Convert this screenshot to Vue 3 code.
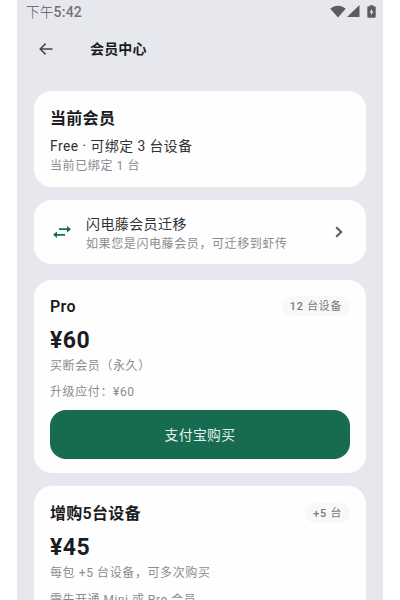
<script setup>
const plans = [
  { name: 'Pro', quota: ['12', '台设备'], price: '¥60', desc: '买断会员（永久）', note: '升级应付：¥60', action: '支付宝购买' },
  { name: '增购5台设备', quota: ['+5', '台'], price: '¥45', desc: '每包 +5 台设备，可多次购买', note: '需先开通 Mini 或 Pro 会员', action: '支付宝购买' },
]
</script>

<template>
  <div class="screen">
    <div class="phone">
      <header class="status">
        <span class="time">下午<span class="clock">5:42</span></span>
        <div class="signals">
          <svg class="wifi" viewBox="0 0 16 13"><path d="M0.3 3.8C4.7-.2 11.3-.2 15.700 3.800L8 12.500Z" /></svg>
          <svg class="cell" viewBox="0 0 13 12"><path d="M12.500 0V12H0Z" /></svg>
          <svg class="battery" viewBox="0 0 9 13">
            <path d="M2.700 1.200V.3H6.300V1.200H7.500Q8.700 1.200 8.700 2.400V11.500Q8.700 12.700 7.500 12.700H1.500Q.3 12.700 .3 11.500V2.400Q.3 1.200 1.500 1.200Z" />
            <path class="bolt" d="M4.900 3.800L2.500 7.500H4.100V10.300L6.500 6.600H4.900Z" />
          </svg>
        </div>
      </header>
      <nav class="bar">
        <svg class="back" viewBox="0 0 14 12"><path d="M13.500 6H1.300M6.600 .6L1.200 6L6.600 11.400" /></svg>
        <h1>会员中心</h1>
      </nav>
      <main>
        <section class="card current">
          <h2>当前会员</h2>
          <p class="level">Free · 可绑定 3 台设备</p>
          <p class="muted">当前已绑定 1 台</p>
        </section>
        <section class="card migrate">
          <svg class="swap" viewBox="0 0 18 12">
            <path class="line" d="M6 3.200H14.500M12 8.800H3.500" />
            <path class="head" d="M14 0L18 3.200L14 6.400ZM4 5.600L0 8.800L4 12Z" />
          </svg>
          <div class="info">
            <p class="name">闪电藤会员迁移</p>
            <p class="muted">如果您是闪电藤会员，可迁移到虾传</p>
          </div>
          <svg class="chevron" viewBox="0 0 8 12"><path d="M1.200 1.200L6.200 6L1.200 10.800" /></svg>
        </section>
        <section v-for="plan in plans" :key="plan.name" class="card plan">
          <div class="top">
            <h2>{{ plan.name }}</h2>
            <span class="quota"><b>{{ plan.quota[0] }}</b> {{ plan.quota[1] }}</span>
          </div>
          <div class="price">{{ plan.price }}</div>
          <p class="muted">{{ plan.desc }}</p>
          <p class="muted note">{{ plan.note }}</p>
          <button>{{ plan.action }}</button>
        </section>
      </main>
    </div>
  </div>
</template>

<style>
body { margin: 0; background: #fff; }
</style>

<style scoped>
* { box-sizing: border-box; }
.screen {
  height: 600px;
  overflow: hidden;
  display: flex;
  justify-content: center;
  font-family: Roboto, "Noto Sans CJK SC", sans-serif;
  color: #1b1c1f;
}
.phone { width: 366px; height: 600px; background: #e7e8ee; overflow: hidden; }
h1, h2, p { margin: 0; white-space: nowrap; }
.status {
  height: 24px;
  padding: 0 7px 0 9px;
  display: flex;
  justify-content: space-between;
  align-items: center;
}
.time { font-size: 13.6px; line-height: 24px; font-weight: 300; color: #55565a; letter-spacing: 0.2px; }
.clock { font-size: 14px; font-weight: 500; color: #737478; }
.signals { display: flex; align-items: center; margin-top: -2px; fill: #5b5c60; }
.wifi { width: 16px; height: 13px; }
.cell { width: 13px; height: 12px; margin-left: 1px; }
.battery { width: 9px; height: 13px; margin-left: 7px; }
.bolt { fill: #e7e8ee; }
.bar { height: 50px; padding-left: 22px; display: flex; align-items: center; }
.back { width: 14px; height: 12px; fill: none; stroke: #45464a; stroke-width: 1.5; }
h1 { margin-left: 37px; font-size: 14px; line-height: 20px; font-weight: 600; letter-spacing: 0.15px; }
main { padding: 17px 17px 0; }
.card { background: #fefefe; border-radius: 18px; }
.muted { padding-top: 1px; font-size: 12px; line-height: 18px; letter-spacing: 0.6px; color: #8b8c8f; }
h2 { font-size: 16px; line-height: 24px; font-weight: 600; letter-spacing: 0.3px; }
.current { height: 96px; padding: 16px 16px 0; }
.level { margin-top: 5px; font-size: 13.8px; line-height: 20px; letter-spacing: 0.5px; color: #303134; }
.migrate { height: 64px; margin-top: 13px; padding: 0 23px 0 19px; display: flex; align-items: center; }
.swap { width: 18px; height: 12px; }
.line { fill: none; stroke: #176b50; stroke-width: 1.700; }
.head { fill: #176b50; }
.info { flex: 1; margin-left: 15px; padding-top: 3px; }
.name { font-size: 14px; line-height: 20px; letter-spacing: 0.4px; color: #303134; }
.chevron { width: 8px; height: 12px; fill: none; stroke: #5c5d60; stroke-width: 2.1; }
.plan { height: 193px; margin-top: 16px; padding: 14px 16px 0; }
.plan + .plan { margin-top: 13px; padding-top: 15px; }
.top { height: 24px; display: flex; justify-content: space-between; align-items: center; }
.top h2 { padding-top: 1px; }
.quota {
  height: 20px;
  padding: 0 8px;
  border-radius: 10px;
  background: #f8f8f9;
  font-size: 10.8px;
  line-height: 21px;
  letter-spacing: 0.8px;
  color: #77787b;
}
.quota b { font-weight: 500; }
.price { margin-top: 8px; font-size: 23px; line-height: 30px; font-weight: 700; letter-spacing: 0.5px; }
.note { margin-top: 7px; }
.plan + .plan .note { margin-top: 8px; letter-spacing: 0.5px; }
button {
  display: block;
  width: 100%;
  height: 49px;
  margin-top: 9px;
  padding: 0 0 2px;
  border: 0;
  border-radius: 16px;
  background: #176b50;
  color: #e4f2ec;
  font: inherit;
  font-size: 13.8px;
  letter-spacing: 0.4px;
}
</style>
